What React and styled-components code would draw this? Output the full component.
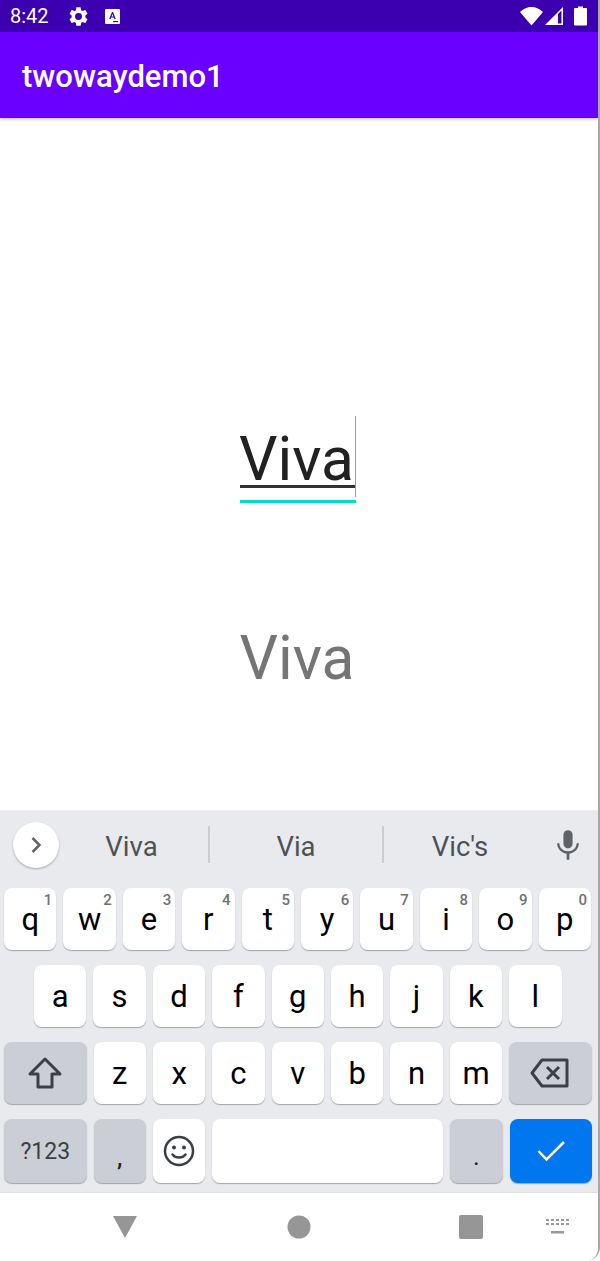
import styled, { createGlobalStyle } from "styled-components"

const GlobalStyle = createGlobalStyle`
    html, body {
        margin: 0;
        padding: 0;
        background: #ffffff;
    }
    body {
        font-family: Roboto, "Liberation Sans", sans-serif;
    }
`;

const Phone = styled.div`
    width: 600px;
    height: 1261px;
    display: flex;
    flex-direction: column;
    overflow: hidden;
    box-sizing: border-box;
    background: #ffffff;
    border-right: 2px solid #a8a8a8;
    border-bottom-right-radius: 14px;
`;
const StatusBar = styled.div`
    height: 32px;
    flex: none;
    display: flex;
    align-items: center;
    padding: 0 11px 0 10px;
    background: #3c00b0;
    color: #ffffff;
`;
const Clock = styled.div`
    font-size: 20px;
    width: 57px;
`;
const StatusIcons = styled.div`
    flex: 1;
    display: flex;
    align-items: center;
    gap: 15px;
`;
const StatusRight = styled.div`
    display: flex;
    align-items: center;
    gap: 1px;
`;
const Battery = styled.svg`
    margin-left: 9px;
`;
const AppBar = styled.div`
    height: 86px;
    flex: none;
    display: flex;
    align-items: center;
    padding: 2px 0 0 22px;
    box-sizing: border-box;
    background: #6a00ff;
    color: #ffffff;
    font-size: 31px;
    font-weight: 500;
    box-shadow: 0 1px 3px rgba(0, 0, 0, 0.3);
`;
const Content = styled.div`
    flex: 1;
    display: flex;
    flex-direction: column;
    align-items: center;
    padding: 298px 2px 0 0;
`;
const Field = styled.div`
    width: 116px;
    height: 84px;
    border-bottom: 3px solid #00ddcc;
    position: relative;
`;
const FieldText = styled.div`
    font-size: 60.5px;
    line-height: 70px;
    padding-top: 9px;
    height: 60px;
    text-indent: -1px;
    color: #212121;
    border-bottom: 3px solid #333333;
`;
const Cursor = styled.div`
    position: absolute;
    right: 0;
    top: 0;
    width: 1px;
    height: 81px;
    background: #00ddcc;
`;
const Output = styled.div`
    margin: 121px 2px 0 0;
    font-size: 60.5px;
    line-height: 70px;
    color: #757575;
`;
const Keyboard = styled.div`
    height: 383px;
    flex: none;
    display: flex;
    flex-direction: column;
    background: #e8eaed;
    border-top: 1px solid #eceef0;
    border-bottom: 1px solid #dfe1e5;
    box-sizing: border-box;
`;
const Suggestions = styled.div`
    height: 77px;
    flex: none;
    display: flex;
    align-items: center;
    padding: 0 16px 10px 13px;
    box-sizing: border-box;
`;
const Expand = styled.div`
    width: 46px;
    height: 46px;
    flex: none;
    display: flex;
    align-items: center;
    justify-content: center;
    border-radius: 50%;
    background: #ffffff;
    box-shadow: 0 1px 2px rgba(60, 64, 67, 0.4);
`;
const Suggestion = styled.div`
    width: ${({ $width }) => $width}px;
    margin-left: ${({ $first }) => ($first ? "-4px" : "0")};
    height: 37px;
    flex: none;
    display: flex;
    align-items: center;
    justify-content: center;
    padding-top: 3px;
    box-sizing: border-box;
    font-size: 27.5px;
    color: #4e5256;
    border-right: ${({ $divider }) => ($divider ? "2px solid #c9ccd0" : "none")};
`;
const Mic = styled.div`
    flex: 1;
    display: flex;
    justify-content: flex-end;
`;
const Rows = styled.div`
    display: flex;
    flex-direction: column;
    gap: 15px;
    padding: 0 6px 0 4px;
`;
const Row = styled.div`
    display: flex;
    gap: 7px;
    height: ${({ $tall }) => ($tall ? "64px" : "62px")};
    padding: ${({ $inset }) => ($inset ? "0 30px" : "0")};
`;
const Key = styled.div`
    width: ${({ $wide }) => ($wide ? "82.5px" : "52.4px")};
    flex: ${({ $grow }) => ($grow ? "1" : "none")};
    height: 100%;
    position: relative;
    display: flex;
    align-items: center;
    justify-content: center;
    box-sizing: border-box;
    border-radius: 8px;
    background: ${({ $tone }) =>
        $tone === "blue" ? "#0077ee" : $tone === "grey" ? "#ccced5" : "#ffffff"};
    box-shadow: 0 1px 1px rgba(60, 64, 67, 0.4);
    color: ${({ $tone }) => ($tone === "grey" ? "#3c4043" : "#000000")};
    font-size: ${({ $small }) => ($small ? "23px" : "31px")};
`;
const Punctuation = styled.span`
    font-size: ${({ $size }) => $size}px;
    font-weight: 500;
    color: #202124;
    padding-top: 14px;
`;
const Hint = styled.span`
    position: absolute;
    top: 3px;
    right: 4px;
    font-size: 15px;
    font-weight: 500;
    color: #6f7276;
`;
const NavBar = styled.div`
    height: 68px;
    flex: none;
    display: flex;
    align-items: center;
    padding-left: 112px;
    box-sizing: border-box;
    background: #ffffff;
`;
const NavIcons = styled.div`
    display: flex;
    align-items: center;
    gap: 148.500px;
`;
const KeyboardToggle = styled.div`
    margin-left: 63px;
    display: flex;
`;

const rowOne = [["q", 1], ["w", 2], ["e", 3], ["r", 4], ["t", 5], ["y", 6], ["u", 7], ["i", 8], ["o", 9], ["p", 0]];
const rowTwo = ["a", "s", "d", "f", "g", "h", "j", "k", "l"];
const rowThree = ["z", "x", "c", "v", "b", "n", "m"];

const App = () => {
    return (
        <Phone>
            <GlobalStyle />
            <StatusBar>
                <Clock>8:42</Clock>
                <StatusIcons>
                    <svg width="23" height="23" viewBox="0 0 24 24" fill="#fff">
                        <path d="M19.14 12.94c.04-.3.06-.61.06-.94 0-.32-.02-.64-.07-.94l2.03-1.58a.49.49 0 0 0 .12-.61l-1.92-3.32a.49.49 0 0 0-.59-.22l-2.39.96c-.5-.38-1.03-.7-1.62-.94l-.36-2.54a.48.48 0 0 0-.48-.41h-3.84c-.24 0-.43.17-.47.41l-.36 2.54c-.59.24-1.13.57-1.62.94l-2.39-.96a.49.49 0 0 0-.59.22L2.74 8.87c-.12.21-.08.47.12.61l2.03 1.58c-.05.3-.09.63-.09.94s.02.64.07.94l-2.03 1.58a.49.49 0 0 0-.12.61l1.92 3.32c.12.22.37.29.59.22l2.39-.96c.5.38 1.03.7 1.62.94l.36 2.54c.05.24.24.41.48.41h3.84c.24 0 .44-.17.47-.41l.36-2.54c.59-.24 1.13-.56 1.62-.94l2.39.96c.22.08.47 0 .59-.22l1.92-3.32c.12-.22.07-.47-.12-.61l-2.01-1.58zM12 15.6A3.6 3.6 0 1 1 12 8.4a3.6 3.6 0 0 1 0 7.2z" />
                    </svg>
                    <svg width="15" height="15" viewBox="0 0 15 15">
                        <rect width="15" height="15" rx="1" fill="#fff" />
                        <path d="M4.2 10 7 3h1l2.8 7H9.4l-.5-1.4H6.1L5.6 10zM6.6 7.4h1.8L7.5 5z" fill="#3c00b0" />
                        <rect x="8" y="12" width="5" height="1.2" fill="#3c00b0" />
                    </svg>
                </StatusIcons>
                <StatusRight>
                    <svg width="23" height="20" viewBox="0 0 23 20" fill="#fff">
                        <path d="M0 6C3 3 7 1 11.500 1S20 3 23 6L11.500 19.500z" />
                    </svg>
                    <svg width="20" height="20" viewBox="0 0 20 20">
                        <path d="M1 19 19 1v18z" fill="#fff" />
                        <path d="M14 8v9.500h3.500V4.500z" fill="#3c00b0" />
                    </svg>
                    <Battery width="13" height="20" viewBox="0 0 13 20" fill="#fff">
                        <path d="M4 2V.5h5V2h3a1 1 0 0 1 1 1v15.500a1 1 0 0 1-1 1H1a1 1 0 0 1-1-1V3a1 1 0 0 1 1-1z" />
                    </Battery>
                </StatusRight>
            </StatusBar>
            <AppBar>twowaydemo1</AppBar>
            <Content>
                <Field>
                    <FieldText>Viva</FieldText>
                    <Cursor />
                </Field>
                <Output>Viva</Output>
            </Content>
            <Keyboard>
                <Suggestions>
                    <Expand>
                        <svg width="24" height="24" viewBox="0 0 24 24" fill="none" stroke="#5f6368" strokeWidth="2.5">
                            <path d="M8.500 5 15.500 12l-7 7" />
                        </svg>
                    </Expand>
                    <Suggestion $first $divider $width={155}>Viva</Suggestion>
                    <Suggestion $divider $width={174}>Via</Suggestion>
                    <Suggestion $width={152}>Vic's</Suggestion>
                    <Mic>
                        <svg width="28" height="32" viewBox="0 0 24 28" fill="#5f6368">
                            <path d="M12 17a4 4 0 0 0 4-4V5a4 4 0 0 0-8 0v8a4 4 0 0 0 4 4z" />
                            <path d="M19.500 12.500c0 4.200-3.400 7-7.500 7s-7.500-2.800-7.500-7H2.500c0 4.900 3.800 8.600 8.300 9.200V27h2.400v-5.300c4.500-.6 8.300-4.300 8.300-9.200z" />
                        </svg>
                    </Mic>
                </Suggestions>
                <Rows>
                    <Row>
                        {rowOne.map(([letter, hint]) => (
                            <Key key={letter}>
                                {letter}
                                <Hint>{hint}</Hint>
                            </Key>
                        ))}
                    </Row>
                    <Row $inset>
                        {rowTwo.map((letter) => (
                            <Key key={letter}>{letter}</Key>
                        ))}
                    </Row>
                    <Row>
                        <Key $wide $tone="grey">
                            <svg width="36" height="34" viewBox="0 0 36 34" fill="none" stroke="#3c4043" strokeWidth="3" strokeLinejoin="round">
                                <path d="M18 3 3 18h8v13h14V18h8z" />
                            </svg>
                        </Key>
                        {rowThree.map((letter) => (
                            <Key key={letter}>{letter}</Key>
                        ))}
                        <Key $wide $tone="grey">
                            <svg width="40" height="32" viewBox="0 0 40 32" fill="none" stroke="#3c4043" strokeWidth="3" strokeLinejoin="round">
                                <path d="M12 3h25v26H12L2 16z" />
                                <path d="M17 10l12 12M29 10 17 22" />
                            </svg>
                        </Key>
                    </Row>
                    <Row $tall>
                        <Key $wide $small $tone="grey">?123</Key>
                        <Key $tone="grey"><Punctuation $size={24}>,</Punctuation></Key>
                        <Key>
                            <svg width="32" height="32" viewBox="0 0 32 32" fill="none" stroke="#3c4043" strokeWidth="2.500">
                                <circle cx="16" cy="16" r="14" />
                                <circle cx="11" cy="12.500" r="2" fill="#3c4043" stroke="none" />
                                <circle cx="21" cy="12.500" r="2" fill="#3c4043" stroke="none" />
                                <path d="M9.500 19.500c3 4 10 4 13 0" strokeLinecap="round" />
                            </svg>
                        </Key>
                        <Key $grow />
                        <Key $tone="grey"><Punctuation $size={20}>.</Punctuation></Key>
                        <Key $wide $tone="blue">
                            <svg width="28" height="22" viewBox="0 0 28 22" fill="none" stroke="#ffffff" strokeWidth="2.500">
                                <path d="M1.500 11l8 8.500L27 2" />
                            </svg>
                        </Key>
                    </Row>
                </Rows>
            </Keyboard>
            <NavBar>
                <NavIcons>
                    <svg width="26" height="24" viewBox="0 0 26 24" fill="#969696">
                        <path d="M1 1h24L13 23z" />
                    </svg>
                    <svg width="24" height="24" viewBox="0 0 24 24" fill="#969696">
                        <circle cx="12" cy="12" r="11.500" />
                    </svg>
                    <svg width="24" height="24" viewBox="0 0 24 24" fill="#969696">
                        <rect width="24" height="24" rx="2" />
                    </svg>
                </NavIcons>
                <KeyboardToggle>
                    <svg width="24" height="16" viewBox="0 0 24 16" fill="#9a9a9a">
                        <path d="M0 0h3v2H0zM5 0h3v2H5zM10 0h3v2h-3zM15 0h3v2h-3zM20 0h3v2h-3zM0 4h3v2H0zM5 4h3v2H5zM10 4h3v2h-3zM15 4h3v2h-3zM20 4h3v2h-3zM5 12h13v2.500H5z" />
                    </svg>
                </KeyboardToggle>
            </NavBar>
        </Phone>
    )
}

export default App
